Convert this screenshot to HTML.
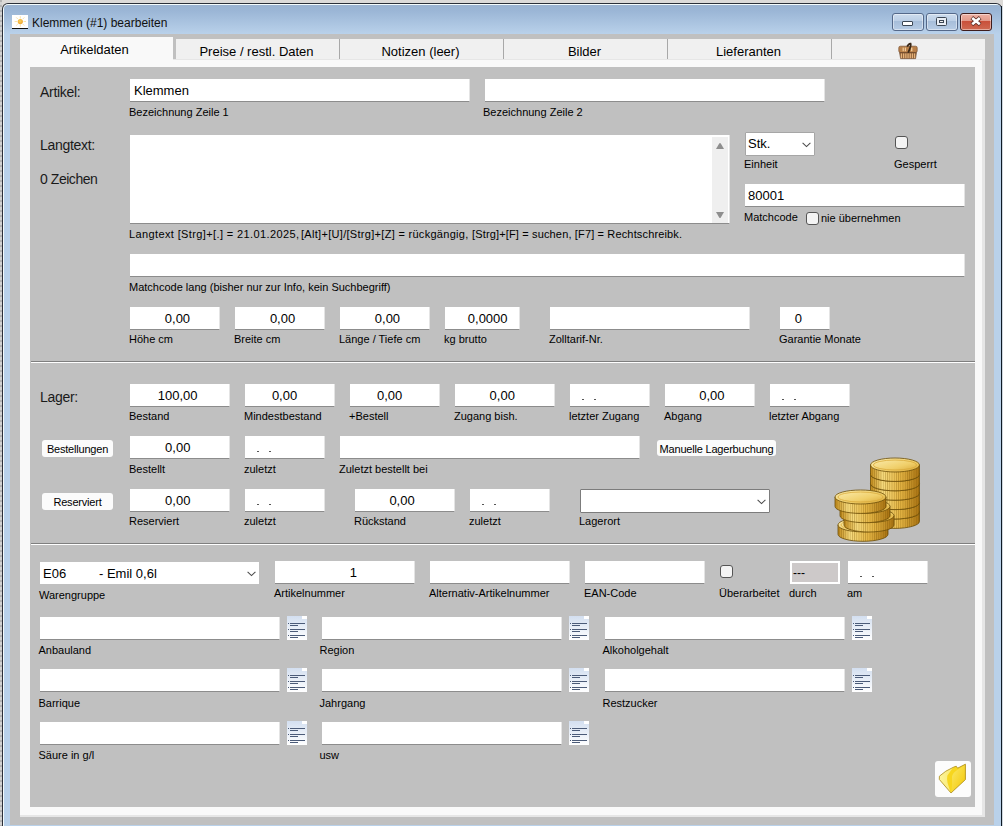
<!DOCTYPE html>
<html><head><meta charset="utf-8"><title>Klemmen (#1) bearbeiten</title>
<style>
html,body{margin:0;padding:0;width:1003px;height:826px;overflow:hidden;background:#d6d4d4;font-family:"Liberation Sans", sans-serif;}
.t{position:absolute;white-space:nowrap;font-family:"Liberation Sans", sans-serif;}
.in{position:absolute;box-sizing:border-box;background:#fff;border-bottom:1px solid #8c8c8c;border-right:1px solid #e4e4e4;}
.ck{position:absolute;box-sizing:border-box;width:13px;height:13px;border:1px solid #555;border-radius:3px;background:#f4f4f4;}
.bt{position:absolute;box-sizing:border-box;background:#fbfbfb;border-radius:3px;}
.sv{position:absolute;overflow:visible;}
</style></head><body>
<div style="position:absolute;left:0;top:0;width:1003px;height:826px;background:#dcdad8"></div><div style="position:absolute;left:0;top:0;width:2px;height:826px;background:repeating-linear-gradient(180deg,#b4b4b4 0 2px,#d2d2d2 2px 5px)"></div><div style="position:absolute;left:2px;top:3px;width:1000px;height:840px;border-radius:6px 6px 0 0;background:#2b2f38"></div><div style="position:absolute;left:3px;top:4px;width:998px;height:840px;border-radius:5px 5px 0 0;background:#f4fbfc"></div><div style="position:absolute;left:4px;top:5px;width:997px;height:840px;border-radius:4px 4px 0 0;background:linear-gradient(180deg,#9ab2d0 0px,#9bb6d6 6px,#b9d1ea 29px,#b9d1ea 100%)"></div><div style="position:absolute;left:1001px;top:6px;width:1px;height:820px;background:#0e1a26"></div><div style="position:absolute;left:1002px;top:6px;width:1px;height:820px;background:#cfd8e0"></div><div style="position:absolute;left:10px;top:34px;width:984px;height:791px;background:#c0c0c0"></div><div style="position:absolute;left:20px;top:59px;width:965px;height:758px;background:#e6e6e6"></div><div style="position:absolute;left:20px;top:60px;width:962px;height:755px;background:#f9f9f9"></div><div style="position:absolute;left:20px;top:37px;width:153px;height:30px;background:#f9f9f9"></div><div style="position:absolute;left:176px;top:39px;width:163px;height:20px;background:#f0f0f0"></div><div style="position:absolute;left:340px;top:39px;width:163px;height:20px;background:#f0f0f0"></div><div style="position:absolute;left:504px;top:39px;width:163px;height:20px;background:#f0f0f0"></div><div style="position:absolute;left:668px;top:39px;width:163px;height:20px;background:#f0f0f0"></div><div style="position:absolute;left:832px;top:39px;width:153px;height:20px;background:#f0f0f0"></div><div style="position:absolute;left:339px;top:39px;width:1px;height:20px;background:#a8a8a8"></div><div style="position:absolute;left:503px;top:39px;width:1px;height:20px;background:#a8a8a8"></div><div style="position:absolute;left:667px;top:39px;width:1px;height:20px;background:#a8a8a8"></div><div style="position:absolute;left:831px;top:39px;width:1px;height:20px;background:#a8a8a8"></div><div class="t" style="left:18px;width:153px;text-align:center;top:43.00px;font-size:13px;line-height:13px;color:#000;">Artikeldaten</div><div class="t" style="left:175px;width:163px;text-align:center;top:45.00px;font-size:13px;line-height:13px;color:#000;">Preise / restl. Daten</div><div class="t" style="left:339px;width:163px;text-align:center;top:45.00px;font-size:13px;line-height:13px;color:#000;">Notizen (leer)</div><div class="t" style="left:503px;width:163px;text-align:center;top:45.00px;font-size:13px;line-height:13px;color:#000;">Bilder</div><div class="t" style="left:667px;width:163px;text-align:center;top:45.00px;font-size:13px;line-height:13px;color:#000;">Lieferanten</div><div style="position:absolute;left:30px;top:67px;width:945px;height:740px;background:#c0c0c0"></div><div style="position:absolute;left:31px;top:361px;width:944px;height:1px;background:#7f7f7f"></div><div style="position:absolute;left:31px;top:362px;width:944px;height:1px;background:#ffffff"></div><div style="position:absolute;left:31px;top:543px;width:944px;height:1px;background:#7f7f7f"></div><div style="position:absolute;left:31px;top:544px;width:944px;height:1px;background:#ffffff"></div><div style="position:absolute;left:12px;top:15px;width:16px;height:13px;background:#fff"></div><div style="position:absolute;left:12px;top:28px;width:16px;height:1px;background:#111"></div><svg class="sv" style="left:12px;top:15px" width="16" height="13" viewBox="0 0 16 13"><defs><radialGradient id="sun" cx="0.45" cy="0.4" r="0.6"><stop offset="0" stop-color="#fbd15a"/><stop offset="1" stop-color="#eda532"/></radialGradient></defs><g stroke="#f9e0a0" stroke-width="0.9"><path d="M8.3 1.2V3.6M8.3 9.4V11.8M2.6 6.5H5M11.6 6.5H14M4.2 2.4L5.8 4M10.8 9L12.4 10.6M4.2 10.6L5.8 9M10.8 4L12.4 2.4"/></g><circle cx="8.3" cy="6.6" r="2.6" fill="url(#sun)"/></svg><div class="t" style="left:32px;top:16.84px;font-size:12px;line-height:12px;color:#111;">Klemmen (#1) bearbeiten</div><div style="position:absolute;left:892px;top:13px;width:30px;height:16px;border:1px solid #55698a;border-radius:3px;background:linear-gradient(180deg,#cddcee 0%,#bccfe6 42%,#a6bdd9 44%,#b7cce5 100%);box-shadow:inset 0 0 0 1px rgba(255,255,255,0.45)"></div><div style="position:absolute;left:926px;top:13px;width:30px;height:16px;border:1px solid #55698a;border-radius:3px;background:linear-gradient(180deg,#cddcee 0%,#bccfe6 42%,#a6bdd9 44%,#b7cce5 100%);box-shadow:inset 0 0 0 1px rgba(255,255,255,0.45)"></div><div style="position:absolute;left:960px;top:13px;width:30px;height:16px;border:1px solid #3e1c1c;border-radius:3px;background:linear-gradient(180deg,#eeb0a4 0%,#e29a8a 42%,#c9503a 46%,#cf6a52 100%);box-shadow:inset 0 0 0 1px rgba(255,255,255,0.45)"></div><div style="position:absolute;left:902px;top:21px;width:9px;height:3px;background:#fff;border:1px solid #3b4654;border-radius:1px"></div><div style="position:absolute;left:936px;top:17px;width:9px;height:7px;border:1px solid #3b4654;border-radius:1.5px;background:#e9eef5"></div><div style="position:absolute;left:939px;top:20px;width:3px;height:1px;border:1px solid #3b4654;background:#f0f0f0"></div><svg class="sv" style="left:970px;top:16px" width="12" height="10" viewBox="0 0 12 10"><path d="M1.8 1.6L10.2 8.6M10.2 1.6L1.8 8.6" stroke="#5a2a22" stroke-width="4" stroke-linecap="butt"/><path d="M2.2 1.9L9.8 8.3M9.8 1.9L2.2 8.3" stroke="#fff" stroke-width="2.6" stroke-linecap="butt"/></svg><svg class="sv" style="left:898px;top:43px" width="20" height="16" viewBox="0 0 20 16"><rect x="0.8" y="3.2" width="18.4" height="6.3" rx="1.6" fill="#b98049" stroke="#7a5030" stroke-width="0.7"/><g fill="#f2cc9c"><rect x="4.6" y="4.6" width="1.2" height="3.6"/><rect x="6.8" y="4.6" width="1.2" height="3.6"/><rect x="13" y="4.6" width="1.4" height="3.6"/></g><path d="M1.6 9.6 H18.4 L17.6 15.6 H2.6 Z" fill="#8a5e36" stroke="#6a4426" stroke-width="0.7"/><g fill="#e6b27a"><rect x="2.8" y="10.4" width="1.3" height="4.8"/><rect x="5" y="10.4" width="1.3" height="4.8"/><rect x="7.2" y="10.4" width="1.3" height="4.8"/><rect x="9.4" y="10.4" width="1.3" height="4.8"/><rect x="11.6" y="10.4" width="1.3" height="4.8"/><rect x="13.8" y="10.4" width="1.3" height="4.8"/><rect x="16" y="10.4" width="1.2" height="4.8"/></g><path d="M9.2 3.6 Q10.8 0.2 12.6 0.6 Q13.4 2.6 10.2 9.6" fill="none" stroke="#3a2818" stroke-width="1.8"/></svg><div class="t" style="left:40px;top:85.15px;font-size:14px;line-height:14px;color:#1a1a1a;letter-spacing:-0.3px">Artikel:</div><div class="in" style="left:130px;top:79px;width:340px;height:23px;"></div><div class="t" style="left:134px;top:84.00px;font-size:13px;line-height:13px;color:#000;">Klemmen</div><div class="t" style="left:129px;top:106.69px;font-size:11px;line-height:11px;color:#000;">Bezeichnung Zeile 1</div><div class="in" style="left:485px;top:79px;width:340px;height:23px;"></div><div class="t" style="left:483px;top:106.69px;font-size:11px;line-height:11px;color:#000;">Bezeichnung Zeile 2</div><div class="t" style="left:40px;top:138.15px;font-size:14px;line-height:14px;color:#1a1a1a;letter-spacing:-0.3px">Langtext:</div><div class="t" style="left:40px;top:172.15px;font-size:14px;line-height:14px;color:#1a1a1a;letter-spacing:-0.45px">0 Zeichen</div><div class="in" style="left:130px;top:135px;width:600px;height:89px"></div><div style="position:absolute;left:712px;top:137px;width:16px;height:86px;background:#efefef"></div><svg class="sv" style="left:715px;top:142px" width="10" height="8"><path d="M1 7 L4.2 1.6 Q5 0.6 5.8 1.6 L9 7 Z" fill="#8e8e8e"/></svg><svg class="sv" style="left:715px;top:211px" width="10" height="8"><path d="M1 1 L4.2 6.4 Q5 7.4 5.8 6.4 L9 1 Z" fill="#8e8e8e"/></svg><div class="t" style="left:129px;top:228.69px;font-size:11px;line-height:11px;color:#000;letter-spacing:0.38px">Langtext [Strg]+[.] = 21.01.2025,</div><div class="t" style="left:301px;top:228.69px;font-size:11px;line-height:11px;color:#000;letter-spacing:0.3px">[Alt]+[U]/[Strg]+[Z] = rückgängig,</div><div class="t" style="left:472px;top:228.69px;font-size:11px;line-height:11px;color:#000;letter-spacing:0.15px">[Strg]+[F] = suchen, [F7] = Rechtschreibk.</div><div style="position:absolute;left:745px;top:132px;width:68px;height:22px;background:#fff;border:1px solid #a6a6a6;border-radius:1px"></div><div class="t" style="left:748px;top:137.00px;font-size:13px;line-height:13px;color:#000;">Stk.</div><svg class="sv" style="left:801.5px;top:142px" width="9" height="6"><path d="M0.6 0.8 L4.5 4.6 L8.4 0.8" fill="none" stroke="#4a4a4a" stroke-width="1.05"/></svg><div class="t" style="left:744px;top:158.69px;font-size:11px;line-height:11px;color:#000;">Einheit</div><div class="ck" style="left:895px;top:136px"></div><div class="t" style="left:894px;top:158.69px;font-size:11px;line-height:11px;color:#000;">Gesperrt</div><div class="in" style="left:745px;top:184px;width:220px;height:23px;"></div><div class="t" style="left:748px;top:189.00px;font-size:13px;line-height:13px;color:#000;">80001</div><div class="t" style="left:744px;top:211.69px;font-size:11px;line-height:11px;color:#000;">Matchcode</div><div class="ck" style="left:806px;top:212px"></div><div class="t" style="left:821px;top:212.69px;font-size:11px;line-height:11px;color:#000;">nie übernehmen</div><div class="in" style="left:130px;top:254px;width:835px;height:23px;"></div><div class="t" style="left:129px;top:281.69px;font-size:11px;line-height:11px;color:#000;">Matchcode lang (bisher nur zur Info, kein Suchbegriff)</div><div class="in" style="left:130px;top:307px;width:90px;height:23px;"></div><div class="t" style="left:164.8px;top:311.60px;font-size:13px;line-height:13px;color:#000;">0,00</div><div class="t" style="left:129px;top:333.69px;font-size:11px;line-height:11px;color:#000;">Höhe cm</div><div class="in" style="left:235px;top:307px;width:90px;height:23px;"></div><div class="t" style="left:269.9px;top:311.60px;font-size:13px;line-height:13px;color:#000;">0,00</div><div class="t" style="left:234px;top:333.69px;font-size:11px;line-height:11px;color:#000;">Breite cm</div><div class="in" style="left:340px;top:307px;width:90px;height:23px;"></div><div class="t" style="left:374.79999999999995px;top:311.60px;font-size:13px;line-height:13px;color:#000;">0,00</div><div class="t" style="left:339px;top:333.69px;font-size:11px;line-height:11px;color:#000;">Länge / Tiefe cm</div><div class="in" style="left:445px;top:307px;width:75px;height:23px;"></div><div class="t" style="left:467.79999999999995px;top:311.60px;font-size:13px;line-height:13px;color:#000;">0,0000</div><div class="t" style="left:444px;top:333.69px;font-size:11px;line-height:11px;color:#000;">kg brutto</div><div class="in" style="left:550px;top:307px;width:200px;height:23px;"></div><div class="t" style="left:549px;top:333.69px;font-size:11px;line-height:11px;color:#000;">Zolltarif-Nr.</div><div class="in" style="left:780px;top:307px;width:50px;height:23px;"></div><div class="t" style="left:794.6999999999999px;top:311.60px;font-size:13px;line-height:13px;color:#000;">0</div><div class="t" style="left:779px;top:333.69px;font-size:11px;line-height:11px;color:#000;">Garantie Monate</div><div class="t" style="left:40px;top:390.15px;font-size:14px;line-height:14px;color:#1a1a1a;letter-spacing:-0.3px">Lager:</div><div class="in" style="left:130px;top:384px;width:100px;height:23px;"></div><div class="t" style="left:157.70000000000002px;top:389.00px;font-size:13px;line-height:13px;color:#000;">100,00</div><div class="t" style="left:129px;top:410.69px;font-size:11px;line-height:11px;color:#000;">Bestand</div><div class="in" style="left:245px;top:384px;width:90px;height:23px;"></div><div class="t" style="left:271.9px;top:389.00px;font-size:13px;line-height:13px;color:#000;">0,00</div><div class="t" style="left:244px;top:410.69px;font-size:11px;line-height:11px;color:#000;">Mindestbestand</div><div class="in" style="left:350px;top:384px;width:90px;height:23px;"></div><div class="t" style="left:377.0px;top:389.00px;font-size:13px;line-height:13px;color:#000;">0,00</div><div class="t" style="left:349px;top:410.69px;font-size:11px;line-height:11px;color:#000;">+Bestell</div><div class="in" style="left:455px;top:384px;width:100px;height:23px;"></div><div class="t" style="left:489.59999999999997px;top:389.00px;font-size:13px;line-height:13px;color:#000;">0,00</div><div class="t" style="left:454px;top:410.69px;font-size:11px;line-height:11px;color:#000;">Zugang bish.</div><div class="in" style="left:570px;top:384px;width:80px;height:23px;"></div><div style="position:absolute;left:582px;top:399px;width:2px;height:1px;background:#555"></div><div style="position:absolute;left:594px;top:399px;width:2px;height:1px;background:#555"></div><div class="t" style="left:569px;top:410.69px;font-size:11px;line-height:11px;color:#000;">letzter Zugang</div><div class="in" style="left:665px;top:384px;width:90px;height:23px;"></div><div class="t" style="left:699.1999999999999px;top:389.00px;font-size:13px;line-height:13px;color:#000;">0,00</div><div class="t" style="left:664px;top:410.69px;font-size:11px;line-height:11px;color:#000;">Abgang</div><div class="in" style="left:770px;top:384px;width:80px;height:23px;"></div><div style="position:absolute;left:782px;top:399px;width:2px;height:1px;background:#555"></div><div style="position:absolute;left:794px;top:399px;width:2px;height:1px;background:#555"></div><div class="t" style="left:769px;top:410.69px;font-size:11px;line-height:11px;color:#000;">letzter Abgang</div><div class="bt" style="left:42px;top:440px;width:71px;height:17px"></div><div class="t" style="left:42px;width:71px;text-align:center;top:443.69px;font-size:11px;line-height:11px;color:#000;letter-spacing:-0.2px">Bestellungen</div><div class="in" style="left:130px;top:436px;width:100px;height:23px;"></div><div class="t" style="left:165.1px;top:440.70px;font-size:13px;line-height:13px;color:#000;">0,00</div><div class="t" style="left:129px;top:463.69px;font-size:11px;line-height:11px;color:#000;">Bestellt</div><div class="in" style="left:245px;top:436px;width:80px;height:23px;"></div><div style="position:absolute;left:257px;top:451px;width:2px;height:1px;background:#555"></div><div style="position:absolute;left:269px;top:451px;width:2px;height:1px;background:#555"></div><div class="t" style="left:244px;top:463.69px;font-size:11px;line-height:11px;color:#000;">zuletzt</div><div class="in" style="left:340px;top:436px;width:300px;height:23px;"></div><div class="t" style="left:339px;top:463.69px;font-size:11px;line-height:11px;color:#000;">Zuletzt bestellt bei</div><div class="bt" style="left:657px;top:440px;width:119px;height:16px"></div><div class="t" style="left:657px;width:119px;text-align:center;top:443.69px;font-size:11px;line-height:11px;color:#000;letter-spacing:-0.2px">Manuelle Lagerbuchung</div><div class="bt" style="left:42px;top:493px;width:71px;height:17px"></div><div class="t" style="left:42px;width:71px;text-align:center;top:496.69px;font-size:11px;line-height:11px;color:#000;letter-spacing:-0.2px">Reserviert</div><div class="in" style="left:130px;top:489px;width:100px;height:23px;"></div><div class="t" style="left:165.1px;top:493.80px;font-size:13px;line-height:13px;color:#000;">0,00</div><div class="t" style="left:129px;top:515.69px;font-size:11px;line-height:11px;color:#000;">Reserviert</div><div class="in" style="left:245px;top:489px;width:80px;height:23px;"></div><div style="position:absolute;left:257px;top:504px;width:2px;height:1px;background:#555"></div><div style="position:absolute;left:269px;top:504px;width:2px;height:1px;background:#555"></div><div class="t" style="left:244px;top:515.69px;font-size:11px;line-height:11px;color:#000;">zuletzt</div><div class="in" style="left:355px;top:489px;width:100px;height:23px;"></div><div class="t" style="left:389.4px;top:493.80px;font-size:13px;line-height:13px;color:#000;">0,00</div><div class="t" style="left:354px;top:515.69px;font-size:11px;line-height:11px;color:#000;">Rückstand</div><div class="in" style="left:470px;top:489px;width:80px;height:23px;"></div><div style="position:absolute;left:482px;top:504px;width:2px;height:1px;background:#555"></div><div style="position:absolute;left:494px;top:504px;width:2px;height:1px;background:#555"></div><div class="t" style="left:469px;top:515.69px;font-size:11px;line-height:11px;color:#000;">zuletzt</div><div style="position:absolute;left:580px;top:489px;width:188px;height:22px;background:#fff;border:1px solid #7c7c7c;border-radius:1px"></div><svg class="sv" style="left:756.5px;top:499px" width="9" height="6"><path d="M0.6 0.8 L4.5 4.6 L8.4 0.8" fill="none" stroke="#4a4a4a" stroke-width="1.05"/></svg><div class="t" style="left:579px;top:515.69px;font-size:11px;line-height:11px;color:#000;">Lagerort</div><svg class="sv" style="left:830px;top:452px" width="95" height="95" viewBox="0 0 95 95"><defs><linearGradient id="cg1" x1="0" y1="0" x2="1" y2="1"><stop offset="0" stop-color="#fcefb4"/><stop offset="0.6" stop-color="#f0cf6a"/><stop offset="1" stop-color="#d6a230"/></linearGradient><linearGradient id="cg2" x1="0" y1="0" x2="1" y2="0"><stop offset="0" stop-color="#c08a1c"/><stop offset="0.25" stop-color="#f7dc80"/><stop offset="0.6" stop-color="#e6b746"/><stop offset="1" stop-color="#a87212"/></linearGradient><pattern id="cstripe" width="2.2" height="4" patternUnits="userSpaceOnUse"><rect x="0" y="0" width="0.8" height="4" fill="rgba(120,80,0,0.35)"/></pattern></defs><path d="M40.5 60.0 v9.4 a24.5 7 0 0 0 49.0 0 v-9.4 Z" fill="url(#cg2)" stroke="#6b4c08" stroke-width="0.8"/><path d="M40.5 60.0 v9.4 a24.5 7 0 0 0 49.0 0 v-9.4 Z" fill="url(#cstripe)"/><ellipse cx="65" cy="60.0" rx="24.5" ry="7" fill="url(#cg1)" stroke="#6b4c08" stroke-width="0.8"/><ellipse cx="65" cy="60.0" rx="21.5" ry="5" fill="none" stroke="#d9a93a" stroke-width="0.8"/><path d="M40.5 50.6 v9.4 a24.5 7 0 0 0 49.0 0 v-9.4 Z" fill="url(#cg2)" stroke="#6b4c08" stroke-width="0.8"/><path d="M40.5 50.6 v9.4 a24.5 7 0 0 0 49.0 0 v-9.4 Z" fill="url(#cstripe)"/><ellipse cx="65" cy="50.6" rx="24.5" ry="7" fill="url(#cg1)" stroke="#6b4c08" stroke-width="0.8"/><ellipse cx="65" cy="50.6" rx="21.5" ry="5" fill="none" stroke="#d9a93a" stroke-width="0.8"/><path d="M40.5 41.2 v9.4 a24.5 7 0 0 0 49.0 0 v-9.4 Z" fill="url(#cg2)" stroke="#6b4c08" stroke-width="0.8"/><path d="M40.5 41.2 v9.4 a24.5 7 0 0 0 49.0 0 v-9.4 Z" fill="url(#cstripe)"/><ellipse cx="65" cy="41.2" rx="24.5" ry="7" fill="url(#cg1)" stroke="#6b4c08" stroke-width="0.8"/><ellipse cx="65" cy="41.2" rx="21.5" ry="5" fill="none" stroke="#d9a93a" stroke-width="0.8"/><path d="M40.5 31.8 v9.4 a24.5 7 0 0 0 49.0 0 v-9.4 Z" fill="url(#cg2)" stroke="#6b4c08" stroke-width="0.8"/><path d="M40.5 31.8 v9.4 a24.5 7 0 0 0 49.0 0 v-9.4 Z" fill="url(#cstripe)"/><ellipse cx="65" cy="31.8" rx="24.5" ry="7" fill="url(#cg1)" stroke="#6b4c08" stroke-width="0.8"/><ellipse cx="65" cy="31.8" rx="21.5" ry="5" fill="none" stroke="#d9a93a" stroke-width="0.8"/><path d="M40.5 22.4 v9.4 a24.5 7 0 0 0 49.0 0 v-9.4 Z" fill="url(#cg2)" stroke="#6b4c08" stroke-width="0.8"/><path d="M40.5 22.4 v9.4 a24.5 7 0 0 0 49.0 0 v-9.4 Z" fill="url(#cstripe)"/><ellipse cx="65" cy="22.4" rx="24.5" ry="7" fill="url(#cg1)" stroke="#6b4c08" stroke-width="0.8"/><ellipse cx="65" cy="22.4" rx="21.5" ry="5" fill="none" stroke="#d9a93a" stroke-width="0.8"/><path d="M40.5 13.0 v9.4 a24.5 7 0 0 0 49.0 0 v-9.4 Z" fill="url(#cg2)" stroke="#6b4c08" stroke-width="0.8"/><path d="M40.5 13.0 v9.4 a24.5 7 0 0 0 49.0 0 v-9.4 Z" fill="url(#cstripe)"/><ellipse cx="65" cy="13.0" rx="24.5" ry="7" fill="url(#cg1)" stroke="#6b4c08" stroke-width="0.8"/><ellipse cx="65" cy="13.0" rx="21.5" ry="5" fill="none" stroke="#d9a93a" stroke-width="0.8"/><path d="M8 72.9 v9.4 a25 7 0 0 0 50 0 v-9.4 Z" fill="url(#cg2)" stroke="#6b4c08" stroke-width="0.8"/><path d="M8 72.9 v9.4 a25 7 0 0 0 50 0 v-9.4 Z" fill="url(#cstripe)"/><ellipse cx="33" cy="72.9" rx="25" ry="7" fill="url(#cg1)" stroke="#6b4c08" stroke-width="0.8"/><ellipse cx="33" cy="72.9" rx="22" ry="5" fill="none" stroke="#d9a93a" stroke-width="0.8"/><path d="M14 63.6 v9.4 a25 7 0 0 0 50 0 v-9.4 Z" fill="url(#cg2)" stroke="#6b4c08" stroke-width="0.8"/><path d="M14 63.6 v9.4 a25 7 0 0 0 50 0 v-9.4 Z" fill="url(#cstripe)"/><ellipse cx="39" cy="63.6" rx="25" ry="7" fill="url(#cg1)" stroke="#6b4c08" stroke-width="0.8"/><ellipse cx="39" cy="63.6" rx="22" ry="5" fill="none" stroke="#d9a93a" stroke-width="0.8"/><path d="M10 54.3 v9.4 a25 7 0 0 0 50 0 v-9.4 Z" fill="url(#cg2)" stroke="#6b4c08" stroke-width="0.8"/><path d="M10 54.3 v9.4 a25 7 0 0 0 50 0 v-9.4 Z" fill="url(#cstripe)"/><ellipse cx="35" cy="54.3" rx="25" ry="7" fill="url(#cg1)" stroke="#6b4c08" stroke-width="0.8"/><ellipse cx="35" cy="54.3" rx="22" ry="5" fill="none" stroke="#d9a93a" stroke-width="0.8"/><path d="M5.0 45 v9.4 a25.5 7 0 0 0 51.0 0 v-9.4 Z" fill="url(#cg2)" stroke="#6b4c08" stroke-width="0.8"/><path d="M5.0 45 v9.4 a25.5 7 0 0 0 51.0 0 v-9.4 Z" fill="url(#cstripe)"/><ellipse cx="30.5" cy="45" rx="25.5" ry="7" fill="url(#cg1)" stroke="#6b4c08" stroke-width="0.8"/><ellipse cx="30.5" cy="45" rx="22.5" ry="5" fill="none" stroke="#d9a93a" stroke-width="0.8"/></svg><div style="position:absolute;left:40px;top:562px;width:219px;height:22px;background:#fff"></div><div class="t" style="left:43px;top:567.00px;font-size:13px;line-height:13px;color:#000;">E06</div><div class="t" style="left:99px;top:567.00px;font-size:13px;line-height:13px;color:#000;">- Emil 0,6l</div><svg class="sv" style="left:246.5px;top:571px" width="9" height="6"><path d="M0.6 0.8 L4.5 4.6 L8.4 0.8" fill="none" stroke="#4a4a4a" stroke-width="1.05"/></svg><div class="t" style="left:39px;top:589.69px;font-size:11px;line-height:11px;color:#000;">Warengruppe</div><div class="in" style="left:275px;top:561px;width:140px;height:23px;"></div><div class="t" style="left:349.8px;top:566.00px;font-size:13px;line-height:13px;color:#000;">1</div><div class="t" style="left:274px;top:587.69px;font-size:11px;line-height:11px;color:#000;">Artikelnummer</div><div class="in" style="left:430px;top:561px;width:140px;height:23px;"></div><div class="t" style="left:429px;top:587.69px;font-size:11px;line-height:11px;color:#000;">Alternativ-Artikelnummer</div><div class="in" style="left:585px;top:561px;width:120px;height:23px;"></div><div class="t" style="left:584px;top:587.69px;font-size:11px;line-height:11px;color:#000;">EAN-Code</div><div class="ck" style="left:720px;top:565px"></div><div class="t" style="left:719px;top:587.69px;font-size:11px;line-height:11px;color:#000;">Überarbeitet</div><div style="position:absolute;left:790px;top:561px;width:46px;height:19px;background:#cdc9c9;border:2px solid #fff"></div><div class="t" style="left:793px;top:566.84px;font-size:12px;line-height:12px;color:#000;">---</div><div class="t" style="left:789px;top:587.69px;font-size:11px;line-height:11px;color:#000;">durch</div><div class="in" style="left:848px;top:561px;width:80px;height:23px;"></div><div style="position:absolute;left:860px;top:576px;width:2px;height:1px;background:#555"></div><div style="position:absolute;left:872px;top:576px;width:2px;height:1px;background:#555"></div><div class="t" style="left:847px;top:587.69px;font-size:11px;line-height:11px;color:#000;">am</div><div class="in" style="left:40px;top:617px;width:240px;height:23px;"></div><svg class="sv" style="left:287px;top:616px" width="20" height="24" viewBox="0 0 20 24"><defs><linearGradient id="ng287_616" x1="0" y1="0" x2="0" y2="1"><stop offset="0" stop-color="#d3dff0"/><stop offset="1" stop-color="#ffffff"/></linearGradient></defs><rect x="0" y="0" width="20" height="24" fill="url(#ng287_616)"/><rect x="15" y="0" width="5" height="3" fill="#fff"/><g fill="#4b5b78"><rect x="1" y="7" width="1" height="1"/><rect x="3" y="7" width="15" height="1"/><rect x="3" y="9" width="8" height="1"/><rect x="1" y="13" width="1" height="1"/><rect x="3" y="13" width="15" height="1"/><rect x="3" y="15" width="8" height="1"/><rect x="1" y="19" width="1" height="1"/><rect x="3" y="19" width="15" height="1"/><rect x="3" y="21" width="8" height="1"/></g></svg><div class="t" style="left:38.5px;top:644.69px;font-size:11px;line-height:11px;color:#000;">Anbauland</div><div class="in" style="left:322px;top:617px;width:240px;height:23px;"></div><svg class="sv" style="left:569px;top:616px" width="20" height="24" viewBox="0 0 20 24"><defs><linearGradient id="ng569_616" x1="0" y1="0" x2="0" y2="1"><stop offset="0" stop-color="#d3dff0"/><stop offset="1" stop-color="#ffffff"/></linearGradient></defs><rect x="0" y="0" width="20" height="24" fill="url(#ng569_616)"/><rect x="15" y="0" width="5" height="3" fill="#fff"/><g fill="#4b5b78"><rect x="1" y="7" width="1" height="1"/><rect x="3" y="7" width="15" height="1"/><rect x="3" y="9" width="8" height="1"/><rect x="1" y="13" width="1" height="1"/><rect x="3" y="13" width="15" height="1"/><rect x="3" y="15" width="8" height="1"/><rect x="1" y="19" width="1" height="1"/><rect x="3" y="19" width="15" height="1"/><rect x="3" y="21" width="8" height="1"/></g></svg><div class="t" style="left:319.5px;top:644.69px;font-size:11px;line-height:11px;color:#000;">Region</div><div class="in" style="left:605px;top:617px;width:240px;height:23px;"></div><svg class="sv" style="left:852px;top:616px" width="20" height="24" viewBox="0 0 20 24"><defs><linearGradient id="ng852_616" x1="0" y1="0" x2="0" y2="1"><stop offset="0" stop-color="#d3dff0"/><stop offset="1" stop-color="#ffffff"/></linearGradient></defs><rect x="0" y="0" width="20" height="24" fill="url(#ng852_616)"/><rect x="15" y="0" width="5" height="3" fill="#fff"/><g fill="#4b5b78"><rect x="1" y="7" width="1" height="1"/><rect x="3" y="7" width="15" height="1"/><rect x="3" y="9" width="8" height="1"/><rect x="1" y="13" width="1" height="1"/><rect x="3" y="13" width="15" height="1"/><rect x="3" y="15" width="8" height="1"/><rect x="1" y="19" width="1" height="1"/><rect x="3" y="19" width="15" height="1"/><rect x="3" y="21" width="8" height="1"/></g></svg><div class="t" style="left:602.5px;top:644.69px;font-size:11px;line-height:11px;color:#000;">Alkoholgehalt</div><div class="in" style="left:40px;top:669px;width:240px;height:23px;"></div><svg class="sv" style="left:287px;top:668px" width="20" height="24" viewBox="0 0 20 24"><defs><linearGradient id="ng287_668" x1="0" y1="0" x2="0" y2="1"><stop offset="0" stop-color="#d3dff0"/><stop offset="1" stop-color="#ffffff"/></linearGradient></defs><rect x="0" y="0" width="20" height="24" fill="url(#ng287_668)"/><rect x="15" y="0" width="5" height="3" fill="#fff"/><g fill="#4b5b78"><rect x="1" y="7" width="1" height="1"/><rect x="3" y="7" width="15" height="1"/><rect x="3" y="9" width="8" height="1"/><rect x="1" y="13" width="1" height="1"/><rect x="3" y="13" width="15" height="1"/><rect x="3" y="15" width="8" height="1"/><rect x="1" y="19" width="1" height="1"/><rect x="3" y="19" width="15" height="1"/><rect x="3" y="21" width="8" height="1"/></g></svg><div class="t" style="left:38.5px;top:697.69px;font-size:11px;line-height:11px;color:#000;">Barrique</div><div class="in" style="left:322px;top:669px;width:240px;height:23px;"></div><svg class="sv" style="left:569px;top:668px" width="20" height="24" viewBox="0 0 20 24"><defs><linearGradient id="ng569_668" x1="0" y1="0" x2="0" y2="1"><stop offset="0" stop-color="#d3dff0"/><stop offset="1" stop-color="#ffffff"/></linearGradient></defs><rect x="0" y="0" width="20" height="24" fill="url(#ng569_668)"/><rect x="15" y="0" width="5" height="3" fill="#fff"/><g fill="#4b5b78"><rect x="1" y="7" width="1" height="1"/><rect x="3" y="7" width="15" height="1"/><rect x="3" y="9" width="8" height="1"/><rect x="1" y="13" width="1" height="1"/><rect x="3" y="13" width="15" height="1"/><rect x="3" y="15" width="8" height="1"/><rect x="1" y="19" width="1" height="1"/><rect x="3" y="19" width="15" height="1"/><rect x="3" y="21" width="8" height="1"/></g></svg><div class="t" style="left:319.5px;top:697.69px;font-size:11px;line-height:11px;color:#000;">Jahrgang</div><div class="in" style="left:605px;top:669px;width:240px;height:23px;"></div><svg class="sv" style="left:852px;top:668px" width="20" height="24" viewBox="0 0 20 24"><defs><linearGradient id="ng852_668" x1="0" y1="0" x2="0" y2="1"><stop offset="0" stop-color="#d3dff0"/><stop offset="1" stop-color="#ffffff"/></linearGradient></defs><rect x="0" y="0" width="20" height="24" fill="url(#ng852_668)"/><rect x="15" y="0" width="5" height="3" fill="#fff"/><g fill="#4b5b78"><rect x="1" y="7" width="1" height="1"/><rect x="3" y="7" width="15" height="1"/><rect x="3" y="9" width="8" height="1"/><rect x="1" y="13" width="1" height="1"/><rect x="3" y="13" width="15" height="1"/><rect x="3" y="15" width="8" height="1"/><rect x="1" y="19" width="1" height="1"/><rect x="3" y="19" width="15" height="1"/><rect x="3" y="21" width="8" height="1"/></g></svg><div class="t" style="left:602.5px;top:697.69px;font-size:11px;line-height:11px;color:#000;">Restzucker</div><div class="in" style="left:40px;top:722px;width:240px;height:23px;"></div><svg class="sv" style="left:287px;top:721px" width="20" height="24" viewBox="0 0 20 24"><defs><linearGradient id="ng287_721" x1="0" y1="0" x2="0" y2="1"><stop offset="0" stop-color="#d3dff0"/><stop offset="1" stop-color="#ffffff"/></linearGradient></defs><rect x="0" y="0" width="20" height="24" fill="url(#ng287_721)"/><rect x="15" y="0" width="5" height="3" fill="#fff"/><g fill="#4b5b78"><rect x="1" y="7" width="1" height="1"/><rect x="3" y="7" width="15" height="1"/><rect x="3" y="9" width="8" height="1"/><rect x="1" y="13" width="1" height="1"/><rect x="3" y="13" width="15" height="1"/><rect x="3" y="15" width="8" height="1"/><rect x="1" y="19" width="1" height="1"/><rect x="3" y="19" width="15" height="1"/><rect x="3" y="21" width="8" height="1"/></g></svg><div class="t" style="left:38.5px;top:749.69px;font-size:11px;line-height:11px;color:#000;">Säure in g/l</div><div class="in" style="left:322px;top:722px;width:240px;height:23px;"></div><svg class="sv" style="left:569px;top:721px" width="20" height="24" viewBox="0 0 20 24"><defs><linearGradient id="ng569_721" x1="0" y1="0" x2="0" y2="1"><stop offset="0" stop-color="#d3dff0"/><stop offset="1" stop-color="#ffffff"/></linearGradient></defs><rect x="0" y="0" width="20" height="24" fill="url(#ng569_721)"/><rect x="15" y="0" width="5" height="3" fill="#fff"/><g fill="#4b5b78"><rect x="1" y="7" width="1" height="1"/><rect x="3" y="7" width="15" height="1"/><rect x="3" y="9" width="8" height="1"/><rect x="1" y="13" width="1" height="1"/><rect x="3" y="13" width="15" height="1"/><rect x="3" y="15" width="8" height="1"/><rect x="1" y="19" width="1" height="1"/><rect x="3" y="19" width="15" height="1"/><rect x="3" y="21" width="8" height="1"/></g></svg><div class="t" style="left:319.5px;top:749.69px;font-size:11px;line-height:11px;color:#000;">usw</div><div class="bt" style="left:935px;top:761px;width:36px;height:36px;border-radius:3px;background:#fcfcfc"></div><svg class="sv" style="left:936px;top:762px" width="34" height="34" viewBox="0 0 34 34"><defs><linearGradient id="fg1" x1="0" y1="0" x2="1" y2="0"><stop offset="0" stop-color="#fdf49a"/><stop offset="1" stop-color="#f4df50"/></linearGradient><linearGradient id="fg2" x1="0" y1="0" x2="1" y2="1"><stop offset="0" stop-color="#fbea6a"/><stop offset="1" stop-color="#f3c600"/></linearGradient></defs><path d="M3.4 14.2 L9.8 9.2 L17.3 5.3 L20.2 4.2 L21.6 6.2 L29.4 2.2 L29.4 17.6 L15 31 L3.3 17.4 Z" fill="url(#fg1)"/><path d="M11.4 13.4 Q10.6 17 11.6 21 L14.6 30.4 L29.4 17.6 L29.4 2.2 L21.6 6.2 L20.2 4.2 L17.3 5.3 Z" fill="#f7d61e"/><path d="M16 14.6 Q17 10.4 21.6 7.8 L29.4 2.6 L29.4 17.6 L15.3 30.6 Q16.6 24 16 14.6 Z" fill="url(#fg2)"/><path d="M3.4 14.2 L9.8 9.2 L17.3 5.3 L20.2 4.2 L21.6 6.2 L29.4 2.2 L29.4 17.6 L15 31 L3.3 17.4 Z" fill="none" stroke="#b39528" stroke-width="0.9" stroke-linejoin="round"/></svg>
</body></html>
